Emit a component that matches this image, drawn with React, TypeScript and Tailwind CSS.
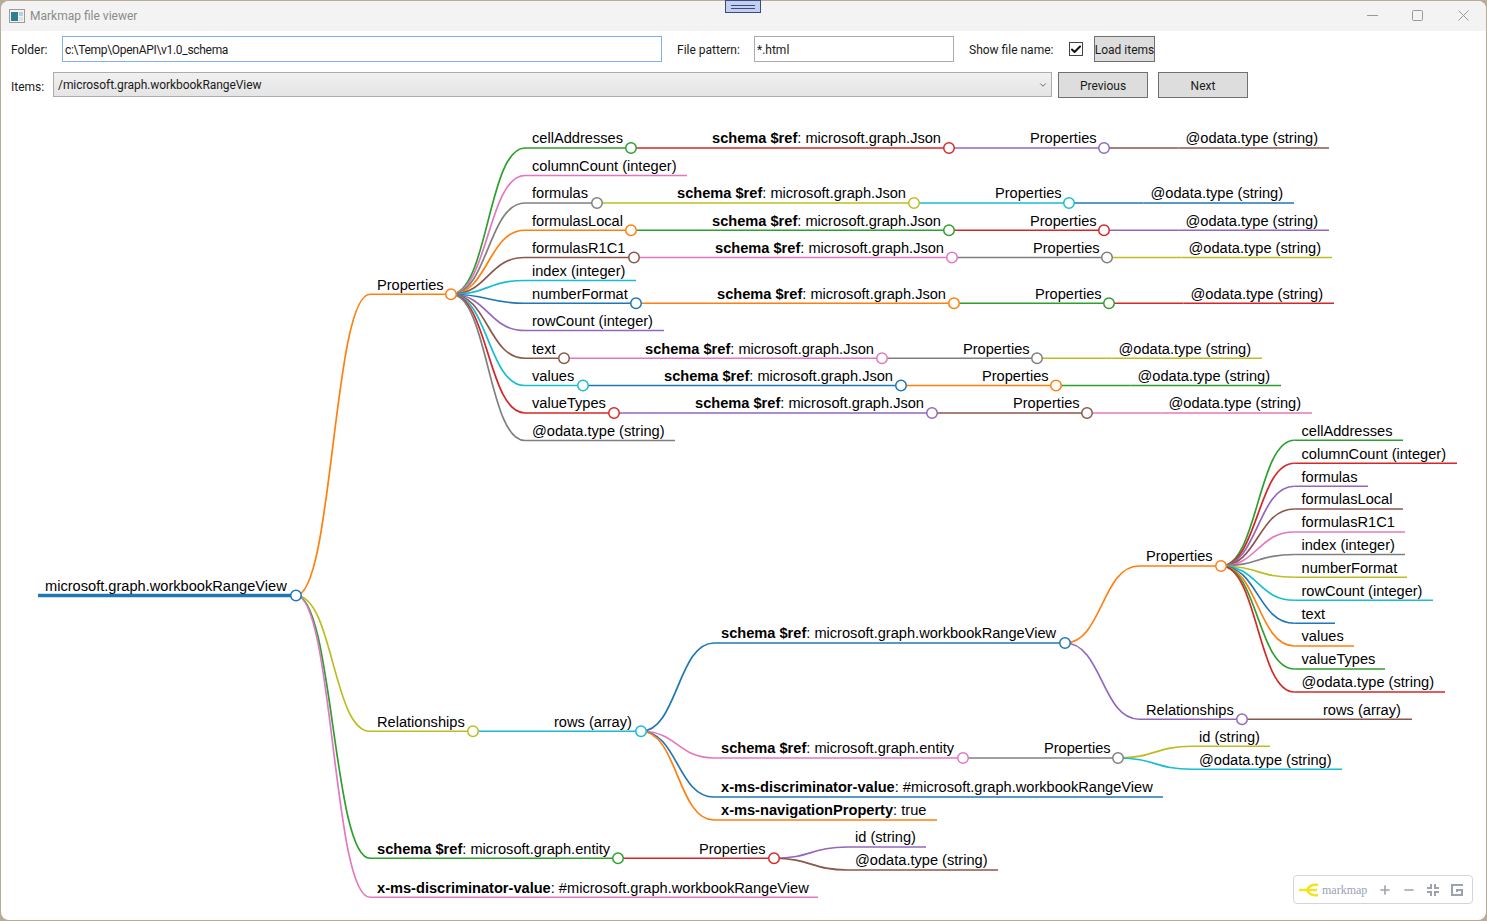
import type { ReactNode } from "react";
import { Check, ChevronDown, Minus, Plus } from "lucide-react";

const PALETTE = [
  "#1f77b4",
  "#ff7f0e",
  "#2ca02c",
  "#d62728",
  "#9467bd",
  "#8c564b",
  "#e377c2",
  "#7f7f7f",
  "#bcbd22",
  "#17becf",
];

// canvas starts below the toolbar rows, node coords below are window coords
const ORIGIN_X = 1;
const ORIGIN_Y = 98;
const PAD = 7;

interface MapNode {
  bold?: string;
  text: string;
  x: number;
  end: number;
  y: number;
  children?: MapNode[];
}

const leaf = (text: string, x: number, end: number, y: number): MapNode => ({
  text,
  x,
  end,
  y,
});

const jsonChain = (
  name: string,
  x: number,
  end: number,
  y: number,
  sx: number,
): MapNode => ({
  text: name,
  x,
  end,
  y,
  children: [
    {
      bold: "schema $ref",
      text: ": microsoft.graph.Json",
      x: sx,
      end: sx + 237,
      y,
      children: [
        {
          text: "Properties",
          x: sx + 318,
          end: sx + 392,
          y,
          children: [leaf("@odata.type (string)", sx + 473.5, sx + 617, y)],
        },
      ],
    },
  ],
});

const TREE: MapNode = {
  text: "microsoft.graph.workbookRangeView",
  x: 45,
  end: 296,
  y: 595.5,
  children: [
    {
      text: "Properties",
      x: 377,
      end: 451,
      y: 294.25,
      children: [
        jsonChain("cellAddresses", 532, 631, 148, 712),
        leaf("columnCount (integer)", 532, 687, 175.5),
        jsonChain("formulas", 532, 597, 203, 677),
        jsonChain("formulasLocal", 532, 631, 230.25, 712),
        jsonChain("formulasR1C1", 532, 634, 257.5, 715),
        leaf("index (integer)", 532, 636, 280.5),
        jsonChain("numberFormat", 532, 636, 303.25, 717),
        leaf("rowCount (integer)", 532, 664, 330.5),
        jsonChain("text", 532, 564, 358.25, 645),
        jsonChain("values", 532, 583, 385.5, 664),
        jsonChain("valueTypes", 532, 614, 413, 695),
        leaf("@odata.type (string)", 532, 675, 440.5),
      ],
    },
    {
      text: "Relationships",
      x: 377,
      end: 473,
      y: 731.25,
      children: [
        {
          text: "rows (array)",
          x: 554,
          end: 641,
          y: 731.25,
          children: [
            {
              bold: "schema $ref",
              text: ": microsoft.graph.workbookRangeView",
              x: 721,
              end: 1065,
              y: 643,
              children: [
                {
                  text: "Properties",
                  x: 1146,
                  end: 1221,
                  y: 566,
                  children: [
                    leaf("cellAddresses", 1301.5, 1403, 440.25),
                    leaf("columnCount (integer)", 1301.5, 1457, 463.25),
                    leaf("formulas", 1301.5, 1368, 486.25),
                    leaf("formulasLocal", 1301.5, 1403, 509),
                    leaf("formulasR1C1", 1301.5, 1405, 532),
                    leaf("index (integer)", 1301.5, 1405, 554.5),
                    leaf("numberFormat", 1301.5, 1407, 577.25),
                    leaf("rowCount (integer)", 1301.5, 1433, 600.25),
                    leaf("text", 1301.5, 1335, 623.25),
                    leaf("values", 1301.5, 1354, 646),
                    leaf("valueTypes", 1301.5, 1385, 669),
                    leaf("@odata.type (string)", 1301.5, 1445, 692),
                  ],
                },
                {
                  text: "Relationships",
                  x: 1146,
                  end: 1242,
                  y: 719.25,
                  children: [leaf("rows (array)", 1323, 1412, 719.25)],
                },
              ],
            },
            {
              bold: "schema $ref",
              text: ": microsoft.graph.entity",
              x: 721,
              end: 963,
              y: 758,
              children: [
                {
                  text: "Properties",
                  x: 1044,
                  end: 1118,
                  y: 758,
                  children: [
                    leaf("id (string)", 1199, 1270, 746.25),
                    leaf("@odata.type (string)", 1199, 1342, 769.25),
                  ],
                },
              ],
            },
            {
              bold: "x-ms-discriminator-value",
              text: ": #microsoft.graph.workbookRangeView",
              x: 721,
              end: 1163,
              y: 797,
            },
            {
              bold: "x-ms-navigationProperty",
              text: ": true",
              x: 721,
              end: 937,
              y: 820,
            },
          ],
        },
      ],
    },
    {
      bold: "schema $ref",
      text: ": microsoft.graph.entity",
      x: 377,
      end: 618,
      y: 858.25,
      children: [
        {
          text: "Properties",
          x: 699,
          end: 774,
          y: 858.25,
          children: [
            leaf("id (string)", 855, 926, 847),
            leaf("@odata.type (string)", 855, 998, 870),
          ],
        },
      ],
    },
    {
      bold: "x-ms-discriminator-value",
      text: ": #microsoft.graph.workbookRangeView",
      x: 377,
      end: 818,
      y: 897.25,
    },
  ],
};

interface PlacedNode extends MapNode {
  color: string;
  parent?: PlacedNode;
  isRoot: boolean;
}

function flatten(root: MapNode): PlacedNode[] {
  const out: PlacedNode[] = [];
  const walk = (node: MapNode, parent?: PlacedNode) => {
    const placed: PlacedNode = {
      ...node,
      parent,
      isRoot: !parent,
      color: PALETTE[out.length % PALETTE.length],
    };
    out.push(placed);
    node.children?.forEach((child) => walk(child, placed));
  };
  walk(root);
  return out;
}

const NODES = flatten(TREE);

function linkPath(node: PlacedNode) {
  const parent = node.parent!;
  const tx = node.x - PAD;
  const mid = (parent.end + tx) / 2;
  return `M${parent.end},${parent.y}C${mid},${parent.y} ${mid},${node.y} ${tx},${node.y}`;
}

function MindMap() {
  return (
    <>
      <svg
        className="absolute left-0 top-0 overflow-visible"
        width={1}
        height={1}
        style={{ transform: `translate(${-ORIGIN_X}px, ${-ORIGIN_Y}px)` }}
      >
        {NODES.map((node, i) => (
          <g key={i} stroke={node.color} fill="none">
            {node.parent && <path d={linkPath(node)} strokeWidth={1.7} />}
            <line
              x1={node.x - PAD}
              x2={node.end}
              y1={node.y}
              y2={node.y}
              strokeWidth={node.isRoot ? 3.5 : 1.7}
            />
          </g>
        ))}
        {NODES.filter((n) => n.children).map((node, i) => (
          <circle
            key={i}
            cx={node.end}
            cy={node.y}
            r={5.25}
            fill="#fff"
            stroke={node.color}
            strokeWidth={1.5}
          />
        ))}
      </svg>
      {NODES.map((node, i) => (
        <div
          key={i}
          className="absolute whitespace-nowrap font-['Liberation_Sans',Arial,sans-serif] text-[14.62px] leading-[20px] text-black"
          style={{
            left: node.x - ORIGIN_X,
            top: Math.round(node.y + 0.25) - 20 - ORIGIN_Y,
          }}
        >
          {node.bold && <b>{node.bold}</b>}
          {node.text}
        </div>
      ))}
    </>
  );
}

function MapToolbar() {
  return (
    <div className="absolute bottom-[16px] right-[13px] flex h-[29px] w-[180px] items-center rounded-[4px] border border-[#d4d4de] bg-white pl-[4px] text-[#9ca3af]">
      <svg width="21" height="14" viewBox="0 0 21 14" fill="none">
        <path
          d="M20 2C14 1 11 3 9 7C11 11 14 13 20 12M1 7H19"
          stroke="#f2e424"
          strokeWidth="2.6"
        />
      </svg>
      <span className="ml-[3px] font-['Liberation_Serif',serif] text-[12px] text-[#9aa0b8]">
        markmap
      </span>
      <Plus size={14} strokeWidth={2.8} className="ml-[11px]" />
      <Minus size={14} strokeWidth={2.8} className="ml-[10px]" />
      <svg width="12" height="12" viewBox="0 0 12 12" className="ml-[11px]" fill="currentColor">
        <path d="M3 0h2v5H0V3h3zM7 0h2v3h3v2H7zM0 7h5v5H3V9H0zM7 7h5v2H9v3H7z" />
      </svg>
      <svg width="12" height="12" viewBox="0 0 12 12" className="ml-[12px]" fill="none" stroke="currentColor" strokeWidth="2">
        <path d="M12 1H1V11H11V6H6V8" />
      </svg>
    </div>
  );
}

function Label({ children, className }: { children: ReactNode; className: string }) {
  return <span className={`whitespace-nowrap pt-[2px] ${className}`}>{children}</span>;
}

const btn =
  "flex h-[26px] items-center justify-center whitespace-nowrap border border-[#707070] bg-[#dddddd] pt-[2px]";

export default function App() {
  return (
    <div className="relative h-screen w-screen overflow-hidden bg-[#b8ab98] p-px">
      <div className="flex h-full flex-col overflow-hidden rounded-[8px] bg-white font-['Roboto',sans-serif] text-[12px] text-[#1a1a1a]">
        <div className="flex h-[30px] shrink-0 items-center bg-[#f3f3f3] pl-[8px]">
          <svg width="16" height="14" viewBox="0 0 16 14">
            <rect x="0.5" y="0.5" width="15" height="13" fill="#f4f4f4" stroke="#9a9a9a" />
            <rect x="2" y="3" width="7" height="9" fill="#2f7f8f" />
            <rect x="10" y="3" width="4" height="4" fill="#b8d0dc" />
            <rect x="10" y="8" width="4" height="4" fill="#d8e4ea" />
          </svg>
          <span className="ml-[5px] text-[#8b8b8b]">Markmap file viewer</span>
          <div className="ml-auto mb-[2px] flex items-center">
            <svg width="11" height="11" viewBox="0 0 11 11" stroke="#999" fill="none" className="mr-[34px]">
              <path d="M0 5.5H11" />
            </svg>
            <svg width="11" height="11" viewBox="0 0 11 11" stroke="#999" fill="none" className="mr-[35px]">
              <rect x="0.5" y="0.5" width="10" height="10" rx="1" />
            </svg>
            <svg width="11" height="11" viewBox="0 0 11 11" stroke="#999" fill="none" className="mr-[17px]">
              <path d="M0.5 0.5L10.5 10.5M10.5 0.5L0.5 10.5" />
            </svg>
          </div>
        </div>

        <div className="mt-[5px] flex h-[26px] shrink-0 items-center pl-[10px]">
          <Label className="w-[51px]">Folder:</Label>
          <div className="flex h-[26px] w-[600px] items-center border border-[#7eb4ea] pl-[2px] pt-[2px] tracking-[-0.3px]">
            c:\Temp\OpenAPI\v1.0_schema
          </div>
          <Label className="ml-[15px] w-[77px]">File pattern:</Label>
          <div className="flex h-[26px] w-[200px] items-center border border-[#ababab] pl-[2px] pt-[2px]">
            *.html
          </div>
          <Label className="ml-[15px] w-[100px]">Show file name:</Label>
          <div className="flex h-[14px] w-[14px] items-center justify-center border border-[#444]">
            <Check size={13} strokeWidth={4} className="text-[#111]" />
          </div>
          <div className={`${btn} ml-[11px] w-[61px]`}>Load items</div>
        </div>

        <div className="mt-[10px] flex h-[26px] shrink-0 items-start pl-[10px]">
          <Label className="mt-[4px] w-[42px]">Items:</Label>
          <div className="flex h-[25px] w-[999px] items-center justify-between border border-[#acacac] bg-gradient-to-b from-[#f0f0f0] to-[#e5e5e5] pl-[4px] pr-[3px] tracking-[-0.06px]">
            <span>/microsoft.graph.workbookRangeView</span>
            <ChevronDown size={10} className="text-[#555]" />
          </div>
          <div className={`${btn} ml-[6px] w-[90px]`}>Previous</div>
          <div className={`${btn} ml-[10px] w-[90px]`}>Next</div>
        </div>

        <div className="relative flex-1">
          <MindMap />
          <MapToolbar />
        </div>
      </div>

      <div className="absolute left-[725px] top-0 flex h-[13px] w-[36px] flex-col items-center justify-center gap-[2px] border border-[#3c4a7e] bg-[#c3cfee]">
        <div className="h-px w-[24px] bg-[#3c4a7e]" />
        <div className="h-px w-[24px] bg-[#3c4a7e]" />
      </div>
    </div>
  );
}
